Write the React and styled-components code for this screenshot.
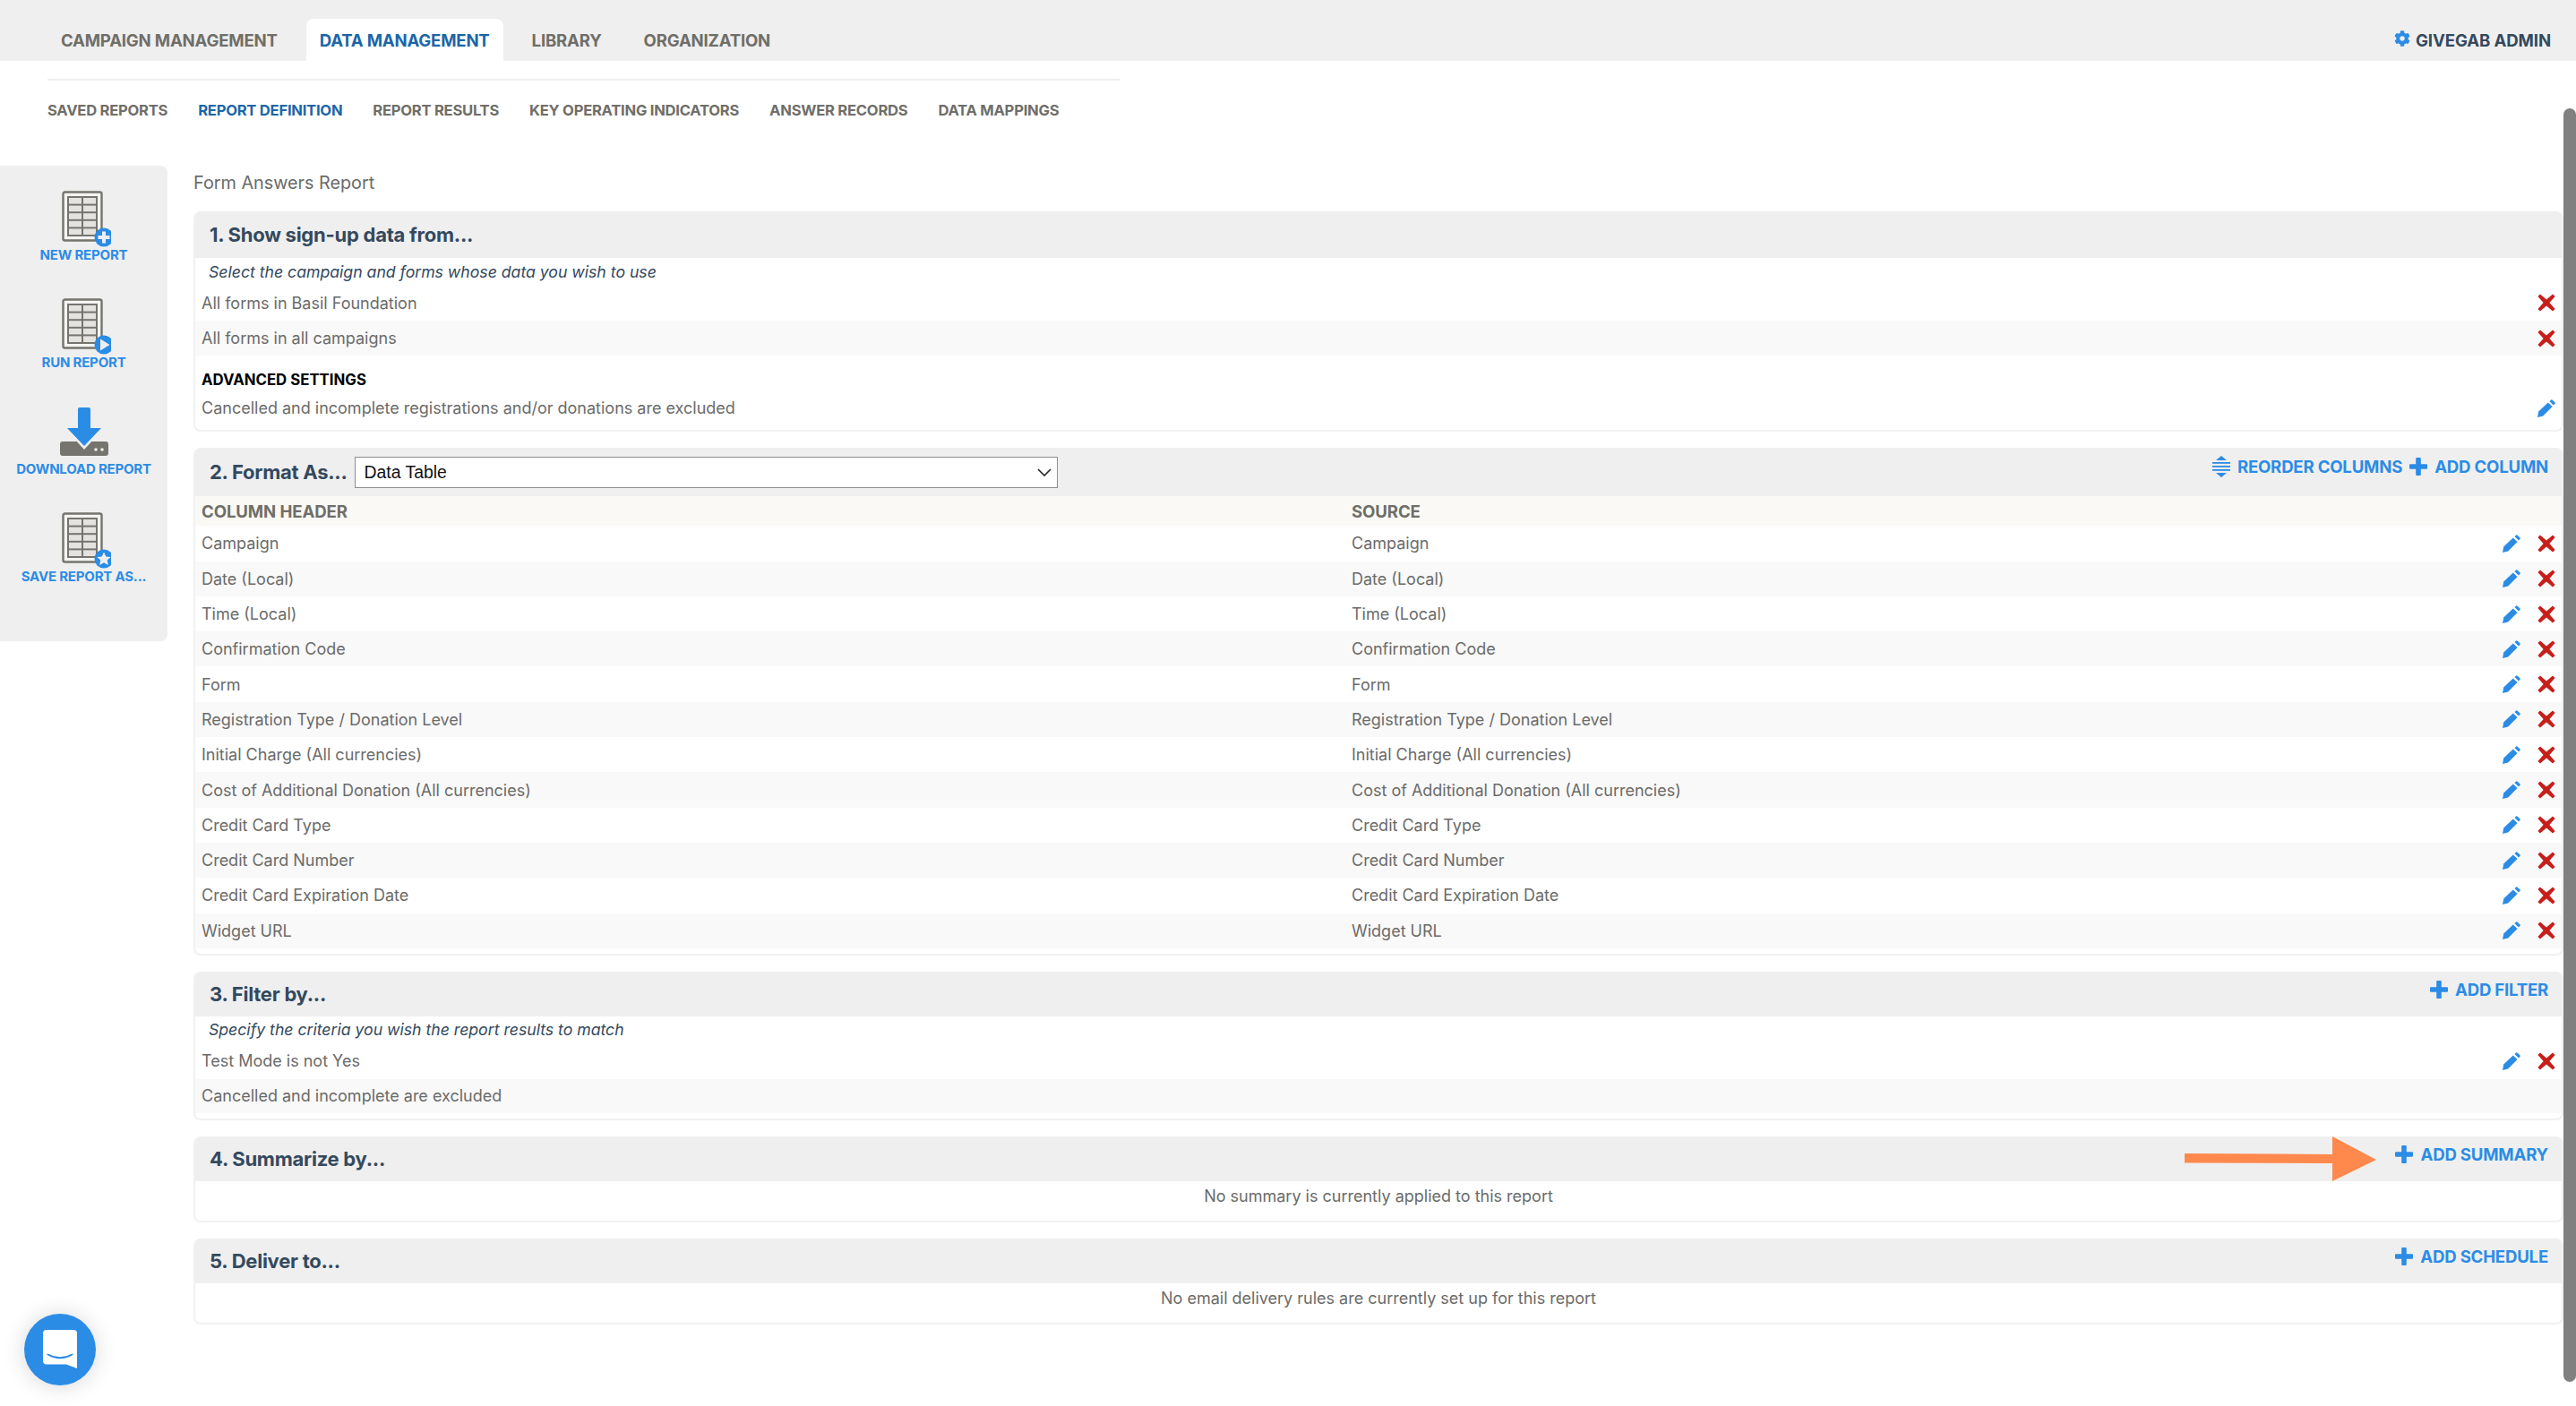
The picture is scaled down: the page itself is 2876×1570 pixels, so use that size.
import React from 'react';
import styled, { createGlobalStyle } from 'styled-components';
import { FaCog } from 'react-icons/fa';

const Global = createGlobalStyle`
  html, body { margin: 0; padding: 0; background: #fff; overflow: hidden; }
  body { font-family: "Inter", "Liberation Sans", sans-serif; color: #6b6b69; }
  * { box-sizing: border-box; }
`;

const BLUE = '#2b8ce6';
const NAVY = '#34495e';
const Page = styled.div`position: relative; width: 2876px; height: 1570px; overflow: hidden;`;
const TopBar = styled.header`height: 68px; background: #efefef; display: flex; align-items: flex-end; justify-content: space-between; padding-left: 53px; padding-right: 28px;`;
const Tabs = styled.nav`display: flex; align-items: flex-end;`;
const Tab = styled.a`
  height: 47px; display: flex; align-items: center; padding: 0 15px; margin-right: 17px;
  font-size: 18.6px; font-weight: 700; letter-spacing: -0.2px; color: ${p => p.$active ? '#1c66a8' : '#6f6e68'};
  background: ${p => p.$active ? '#fff' : 'transparent'}; border-radius: 8px 8px 0 0;
`;
const Admin = styled.div`height: 47px; display: flex; align-items: center; gap: 6px; font-size: 18.6px; font-weight: 700; letter-spacing: -0.1px; color: ${NAVY}; svg { color: ${BLUE}; margin-top: -4px; }`;
const SubNav = styled.nav`margin: 20px 0 0 53px; width: 1198px; height: 58px; border-top: 2px solid #efefef; display: flex; align-items: center; gap: 34px; padding-top: 10px;`;
const SubLink = styled.a`font-size: 16.6px; font-weight: 700; letter-spacing: -0.25px; color: ${p => p.$active ? '#1c66a8' : '#6f6e68'};`;
const Body = styled.div`display: flex; align-items: flex-start; margin-top: 39px;`;
const Side = styled.aside`width: 187px; height: 531px; flex: none; background: #efefef; border-radius: 0 8px 8px 0; padding-top: 28px; display: flex; flex-direction: column;`;
const SideItem = styled.a`height: 119.5px; flex: none; display: flex; flex-direction: column; align-items: center; font-size: 15px; line-height: 18px; font-weight: 700; color: ${BLUE}; letter-spacing: -0.2px; white-space: nowrap; svg { display: block; }`;
const Main = styled.main`width: 2646px; margin-left: 29px;`;
const Title = styled.h1`margin: 0; height: 51px; padding-top: 7px; font-size: 19.8px; line-height: 24px; font-weight: 400; color: #6b6b69;`;
const Section = styled.section`border: 2px solid #f1f1f1; border-top: 0; border-radius: 8px; margin-bottom: 18px; overflow: hidden;`;
const Head = styled.div`height: ${p => p.$h || 52}px; background: #efefef; display: flex; align-items: center; justify-content: space-between; padding: 0 15px 0 16px;`;
const HeadLeft = styled.div`display: flex; align-items: center; gap: 8px;`;
const H2 = styled.h2`margin: 0; font-size: 22px; font-weight: 700; color: ${NAVY}; letter-spacing: -0.25px;`;
const Actions = styled.div`display: flex; align-items: center; gap: 8px; margin-bottom: ${p => p.$mb || 10}px;`;
const Action = styled.a`display: flex; align-items: center; gap: 8px; font-size: 18.6px; font-weight: 700; color: ${BLUE}; letter-spacing: -0.2px;`;
const SelectBox = styled.div`position: relative; width: 785px; height: 35px;`;
const Select = styled.select`appearance: none; width: 100%; height: 100%; font: 19.4px "Liberation Sans", sans-serif; color: #111; background: #fff; border: 1px solid #8e8e8e; border-radius: 0; padding: 0 10px;`;
const Chevron = styled.svg`position: absolute; right: 7px; top: 13px; pointer-events: none;`;
const Hint = styled.div`height: ${p => p.$h || 30}px; padding: 0 0 0 15px; display: flex; align-items: center; font-size: 17.65px; font-style: italic; color: ${NAVY};`;
const Row = styled.div`height: ${p => p.$h || 39.3}px; display: grid; grid-template-columns: 1284px 1fr auto; align-items: center; padding: 0 7px; font-size: 18px; background: ${p => p.$alt ? '#f9f9f9' : '#fff'};`;
const ColHead = styled(Row)`height: 33px; background: #faf9f5; font-size: 18.6px; font-weight: 700; letter-spacing: -0.1px; color: #6f6e68;`;
const RowActions = styled.div`display: flex; align-items: center; justify-content: flex-end; gap: 19px;`;
const Advanced = styled.div`padding: 14px 7px 0; height: 83px;`;
const AdvTitle = styled.div`font-size: 16.8px; font-weight: 700; color: #000; line-height: 26px;`;
const AdvRow = styled.div`display: flex; justify-content: space-between; align-items: center; margin-top: 8px; font-size: 18px;`;
const Spacer = styled.div`height: 6px;`;
const Empty = styled.div`height: ${p => p.$h}px; display: flex; align-items: center; justify-content: center; font-size: 18px; padding-bottom: 10px;`;
const Scrollbar = styled.div`position: absolute; left: 2862px; top: 121px; width: 14px; height: 1422px; background: #808080; border-radius: 7px;`;
const Chat = styled.div`position: absolute; left: 27px; top: 1467px; width: 80px; height: 80px; border-radius: 50%; background: ${BLUE}; box-shadow: 0 1px 24px rgba(0,0,0,.16); display: flex; align-items: center; justify-content: center;`;
const Arrow = styled.svg`position: absolute; left: 2439px; top: 1269px;`;

const Pencil = () => (
  <svg width="20" height="20" viewBox="0 0 20 20" fill={BLUE}>
    <path d="M0 20 L1.2 13.5 L11.8 3.4 L16.6 8 L6.2 18.4 Z" />
    <path d="M13.4 2 L15.2 .4 Q15.8 0 16.4 .4 L19.6 3.6 Q20 4.2 19.6 4.8 L18 6.6 Z" />
  </svg>
);
const Cross = () => (
  <svg width="20" height="20" viewBox="0 0 20 20" fill="#c61f1a">
    <path d="M3 .4 L10 6.6 L17 .4 L19.6 3 L13.4 10 L19.6 17 L17 19.6 L10 13.4 L3 19.6 L.4 17 L6.6 10 L.4 3 Z" />
  </svg>
);
const Plus = () => (
  <svg width="20" height="20" viewBox="0 0 20 20" fill={BLUE}>
    <path d="M7.2 1 Q7.2 0 8.2 0 H11.8 Q12.8 0 12.8 1 V7.2 H19 Q20 7.2 20 8.2 V11.8 Q20 12.8 19 12.8 H12.8 V19 Q12.8 20 11.8 20 H8.2 Q7.2 20 7.2 19 V12.8 H1 Q0 12.8 0 11.8 V8.2 Q0 7.2 1 7.2 H7.2 Z" />
  </svg>
);
const Reorder = () => (
  <svg width="20" height="24" viewBox="0 0 20 24" fill={BLUE}>
    <path d="M10 0 L16 5 H4 Z M10 24 L4 19 H16 Z" />
    <rect y="7" width="20" height="1.8" /><rect y="11" width="20" height="1.8" /><rect y="15" width="20" height="1.8" />
  </svg>
);
const Badge = ({ kind }) => (
  <g>
    <circle cx="52" cy="52" r="10.5" fill={BLUE} />
    {kind === 'plus' && <path d="M50 45.5 H54 V50 H58.5 V54 H54 V58.5 H50 V54 H45.5 V50 H50 Z" fill="#efefef" />}
    {kind === 'play' && <path d="M48 45.5 L58.5 52 L48 58.5 Z" fill="#efefef" />}
    {kind === 'star' && <path d="M52 44.5 L54.3 49.4 L59.6 50 L55.7 53.6 L56.8 58.9 L52 56.2 L47.2 58.9 L48.3 53.6 L44.4 50 L49.7 49.4 Z" fill="#efefef" />}
  </g>
);
const ReportIcon = ({ kind }) => (
  <svg width="60" height="63" viewBox="0 0 60 63">
    <rect x="6.5" y="1.5" width="43" height="54" rx="2" fill="#f4f4f2" stroke="#76746e" strokeWidth="2.4" />
    <rect x="11" y="6" width="34" height="45" fill="#76746e" />
    {[0, 1, 2, 3, 4].map(i => (
      <g key={i}>
        <rect x="13" y={8 + i * 8.6} width="14" height="6.6" fill="#e4e3df" />
        <rect x="29" y={8 + i * 8.6} width="14" height="6.6" fill="#e4e3df" />
      </g>
    ))}
    <Badge kind={kind} />
  </svg>
);
const DownloadIcon = () => (
  <svg width="60" height="63" viewBox="0 0 60 63">
    <rect x="3" y="41" width="54" height="16" rx="3" fill="#76746e" />
    <circle cx="43" cy="50" r="1.8" fill="#efefef" /><circle cx="50" cy="50" r="1.8" fill="#efefef" />
    <path d="M8 26 H52 L30 50 Z" fill="#efefef" />
    <path d="M23 5 Q23 3 25 3 H35 Q37 3 37 5 V26 H49 L30 46 L11 26 H23 Z" fill={BLUE} />
  </svg>
);
const ChatIcon = () => (
  <svg width="38" height="44" viewBox="0 0 38 44">
    <path d="M4 0 H34 Q38 0 38 4 V43 L26 38.5 H4 Q0 38.5 0 34.5 V4 Q0 0 4 0 Z" fill="#fff" />
    <path d="M5.5 27.5 Q19 35 32.5 27.5" fill="none" stroke={BLUE} strokeWidth="2" strokeLinecap="round" />
  </svg>
);
const Acts = ({ pencil = true, cross = true }) => (
  <RowActions>{pencil && <Pencil />}{cross && <Cross />}</RowActions>
);

const columns = ['Campaign', 'Date (Local)', 'Time (Local)', 'Confirmation Code', 'Form', 'Registration Type / Donation Level', 'Initial Charge (All currencies)', 'Cost of Additional Donation (All currencies)', 'Credit Card Type', 'Credit Card Number', 'Credit Card Expiration Date', 'Widget URL'];

export default function App() {
  return (
    <Page>
      <Global />
      <TopBar>
        <Tabs>
          <Tab>CAMPAIGN MANAGEMENT</Tab>
          <Tab $active>DATA MANAGEMENT</Tab>
          <Tab>LIBRARY</Tab>
          <Tab>ORGANIZATION</Tab>
        </Tabs>
        <Admin><FaCog size={18} />GIVEGAB ADMIN</Admin>
      </TopBar>
      <SubNav>
        <SubLink>SAVED REPORTS</SubLink>
        <SubLink $active>REPORT DEFINITION</SubLink>
        <SubLink>REPORT RESULTS</SubLink>
        <SubLink>KEY OPERATING INDICATORS</SubLink>
        <SubLink>ANSWER RECORDS</SubLink>
        <SubLink>DATA MAPPINGS</SubLink>
      </SubNav>
      <Body>
        <Side>
          <SideItem><ReportIcon kind="plus" />NEW REPORT</SideItem>
          <SideItem><ReportIcon kind="play" />RUN REPORT</SideItem>
          <SideItem><DownloadIcon />DOWNLOAD REPORT</SideItem>
          <SideItem><ReportIcon kind="star" />SAVE REPORT AS...</SideItem>
        </Side>
        <Main>
          <Title>Form Answers Report</Title>
          <Section>
            <Head><H2>1. Show sign-up data from...</H2></Head>
            <Hint>Select the campaign and forms whose data you wish to use</Hint>
            <Row $h={40}><span>All forms in Basil Foundation</span><span /><Acts pencil={false} /></Row>
            <Row $alt><span>All forms in all campaigns</span><span /><Acts pencil={false} /></Row>
            <Advanced>
              <AdvTitle>ADVANCED SETTINGS</AdvTitle>
              <AdvRow><span>Cancelled and incomplete registrations and/or donations are excluded</span><Pencil /></AdvRow>
            </Advanced>
          </Section>
          <Section>
            <Head $h={54}>
              <HeadLeft>
                <H2>2. Format As...</H2>
                <SelectBox>
                  <Select defaultValue="Data Table"><option>Data Table</option></Select>
                  <Chevron width="16" height="9" viewBox="0 0 16 9"><path d="M1 1 L8 8 L15 1" fill="none" stroke="#222" strokeWidth="1.6" /></Chevron>
                </SelectBox>
              </HeadLeft>
              <Actions $mb={12}>
                <Action><Reorder />REORDER COLUMNS</Action>
                <Action><Plus />ADD COLUMN</Action>
              </Actions>
            </Head>
            <ColHead><span>COLUMN HEADER</span><span>SOURCE</span><span /></ColHead>
            {columns.map((c, i) => (
              <Row key={c} $alt={i % 2 === 1}><span>{c}</span><span>{c}</span><Acts /></Row>
            ))}
            <Spacer />
          </Section>
          <Section>
            <Head $h={50}>
              <H2>3. Filter by...</H2>
              <Actions><Action><Plus />ADD FILTER</Action></Actions>
            </Head>
            <Hint>Specify the criteria you wish the report results to match</Hint>
            <Row $h={40}><span>Test Mode is not Yes</span><span /><Acts /></Row>
            <Row $alt $h={38}><span>Cancelled and incomplete are excluded</span></Row>
            <Spacer />
          </Section>
          <Section>
            <Head $h={50}>
              <H2>4. Summarize by...</H2>
              <Actions><Action><Plus />ADD SUMMARY</Action></Actions>
            </Head>
            <Empty $h={44}>No summary is currently applied to this report</Empty>
          </Section>
          <Section>
            <Head $h={50}>
              <H2>5. Deliver to...</H2>
              <Actions><Action><Plus />ADD SCHEDULE</Action></Actions>
            </Head>
            <Empty $h={44}>No email delivery rules are currently set up for this report</Empty>
          </Section>
        </Main>
      </Body>
      <Arrow width="214" height="50" viewBox="0 0 214 50">
        <path d="M0 19 L165 20 V0 L214 26 L165 50 V30 L0 29.5 Z" fill="#ff884d" />
      </Arrow>
      <Scrollbar />
      <Chat><ChatIcon /></Chat>
    </Page>
  );
}
